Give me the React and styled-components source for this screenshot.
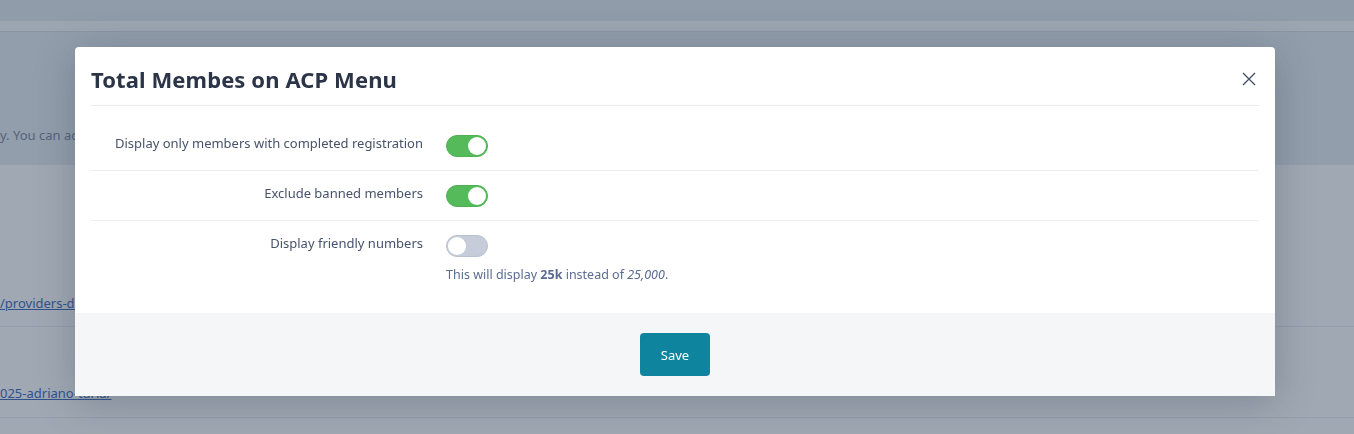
import React from 'react';
import styled, { createGlobalStyle } from 'styled-components';

const GlobalStyle = createGlobalStyle`
  html, body {
    margin: 0;
    padding: 0;
    height: 100%;
    overflow: hidden;
  }
  body {
    font-family: "Noto Sans", "Open Sans", Arial, sans-serif;
    background: #a0a8b3;
  }
`;

const Page = styled.div`
  width: 1354px;
  height: 434px;
  overflow: hidden;
  background: #a0a8b3;
`;

const TopBar = styled.div`
  height: 21px;
  background: #909caa;
`;

const SubBar = styled.div`
  height: 10px;
  background: #9ca6b1;
  border-bottom: 1px solid #8a95a3;
`;

const Intro = styled.div`
  height: 133px;
  background: #929eac;
  display: flex;
  align-items: flex-end;
  padding-bottom: 20px;
  box-sizing: border-box;
  font-size: 13px;
  line-height: 20px;
  color: #56627a;
`;

const EntryRow = styled.div`
  height: ${p => p.h}px;
  border-bottom: 1px solid #959ead;
  display: flex;
  align-items: flex-end;
  padding-bottom: ${p => p.pb}px;
  box-sizing: border-box;
`;

const EntryLink = styled.a`
  font-size: 13px;
  color: #30528a;
  text-decoration: underline;
`;

const Overlay = styled.div`
  position: fixed;
  inset: 0;
  display: flex;
  justify-content: center;
  align-items: flex-start;
  padding: 47px 4px 0 0;
`;

const Modal = styled.div`
  width: 1200px;
  background: #fff;
  border-radius: 4px 4px 0 0;
  box-shadow: 0 6px 40px rgba(40, 50, 70, 0.28);
`;

const Header = styled.div`
  margin: 0 16px;
  height: 58px;
  border-bottom: 1px solid #e9ebef;
  display: flex;
  align-items: center;
  justify-content: space-between;
`;

const Title = styled.h2`
  margin: 0;
  font-size: 22px;
  letter-spacing: 0.1px;
  font-weight: 700;
  color: #2c3447;
  padding-top: 5px;
`;

const Close = styled.button`
  border: 0;
  background: none;
  padding: 0;
  width: 22px;
  height: 22px;
  display: flex;
  align-items: center;
  justify-content: center;
  margin-right: -1px;
  margin-top: 5px;
  cursor: pointer;
`;

const Body = styled.div`
  padding: 15px 16px 16px;
`;

const FormRow = styled.div`
  display: grid;
  grid-template-columns: 332px 1fr;
  column-gap: 23px;
  padding: 13px 0;
  border-bottom: ${p => (p.last ? 'none' : '1px solid #eceef2')};
`;

const Label = styled.div`
  text-align: right;
  font-size: 13px;
  line-height: 19px;
  color: #47526b;
`;

const Control = styled.div`
  padding-top: 1px;
`;

const Track = styled.span`
  display: block;
  position: relative;
  width: 42px;
  height: 22px;
  border-radius: 11px;
  box-sizing: border-box;
  background: ${p => (p.on ? '#55bb5a' : '#c6ccda')};
  border: 1px solid ${p => (p.on ? '#4fb054' : '#b9c0cf')};
`;

const Knob = styled.span`
  position: absolute;
  top: 1px;
  left: ${p => (p.on ? '21px' : '1px')};
  width: 18px;
  height: 18px;
  border-radius: 50%;
  background: #fff;
`;

const Hint = styled.div`
  margin-top: 9px;
  font-size: 12.5px;
  line-height: 18px;
  color: #5a6d90;
  b { font-weight: 700; }
  i { font-style: italic; }
`;

const Footer = styled.div`
  background: #f5f6f8;
  padding: 20px 0;
  display: flex;
  justify-content: center;
`;

const SaveButton = styled.button`
  width: 70px;
  height: 43px;
  border: 0;
  border-radius: 4px;
  background: #0f849f;
  color: #fff;
  font-family: inherit;
  font-size: 13px;
  cursor: pointer;
`;

const Toggle = ({ on }) => (
  <Track on={on}>
    <Knob on={on} />
  </Track>
);

const CloseIcon = () => (
  <svg width="14" height="14" viewBox="0 0 14 14">
    <path d="M1 1 L13 13 M13 1 L1 13" stroke="#46506b" strokeWidth="1.4" fill="none" />
  </svg>
);

export default function App() {
  return (
    <>
      <GlobalStyle />
      <Page>
        <TopBar />
        <SubBar />
        <Intro>y. You can add</Intro>
        <EntryRow h={162} pb={14}>
          <EntryLink>/providers-directory</EntryLink>
        </EntryRow>
        <EntryRow h={91} pb={15}>
          <EntryLink>025-adriano-turia/</EntryLink>
        </EntryRow>
      </Page>
      <Overlay>
        <Modal>
          <Header>
            <Title>Total Membes on ACP Menu</Title>
            <Close aria-label="Close"><CloseIcon /></Close>
          </Header>
          <Body>
            <FormRow>
              <Label>Display only members with completed registration</Label>
              <Control><Toggle on /></Control>
            </FormRow>
            <FormRow>
              <Label>Exclude banned members</Label>
              <Control><Toggle on /></Control>
            </FormRow>
            <FormRow last>
              <Label>Display friendly numbers</Label>
              <Control>
                <Toggle on={false} />
                <Hint>This will display <b>25k</b> instead of <i>25,000</i>.</Hint>
              </Control>
            </FormRow>
          </Body>
          <Footer>
            <SaveButton>Save</SaveButton>
          </Footer>
        </Modal>
      </Overlay>
    </>
  );
}
